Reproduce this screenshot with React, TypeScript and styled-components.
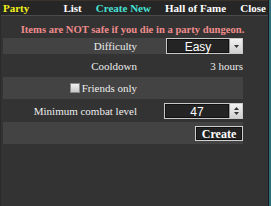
import React from "react";
import styled, { createGlobalStyle } from "styled-components";

const GlobalStyle = createGlobalStyle`
  body {
    margin: 0;
    background: #2f6f7c;
    font-family: "Liberation Serif", "Times New Roman", serif;
  }
`;

const Panel = styled.div`
  width: 267px;
  height: 206px;
  background: #333333;
  border-left: 1px solid #2a2a2a;
  border-right: 1px solid #1c1c1c;
  display: flex;
  flex-direction: column;
`;

const Header = styled.div`
  height: 16px;
  background: #262626;
  border-top: 1px solid #3a3128;
  border-bottom: 1px solid #4a4a4a;
  display: flex;
  align-items: center;
  justify-content: space-between;
  padding: 0 2px 0 2px;
  box-sizing: border-box;
`;

const Tab = styled.span<{ $color: string; $offset?: number }>`
  color: ${(p) => p.$color};
  font-weight: bold;
  font-size: 11px;
  margin-left: ${(p) => p.$offset ?? 0}px;
`;

const Warning = styled.div`
  color: #f08c8c;
  font-weight: bold;
  font-size: 10.6px;
  text-align: center;
  padding: 9px 4px 3px 0;
  line-height: 10px;
`;

const Rows = styled.div`
  width: 240px;
  margin-left: 2px;
  display: flex;
  flex-direction: column;
`;

const Row = styled.div<{ $shade: boolean; $height: number }>`
  display: grid;
  grid-template-columns: 134px 1fr;
  align-items: center;
  height: ${(p) => p.$height}px;
  background: ${(p) => (p.$shade ? "#434343" : "transparent")};
  color: #ececec;
  font-size: 11px;
`;

const Label = styled.div`
  display: flex;
  justify-content: flex-end;
  align-items: center;
  gap: 2px;
`;

const Value = styled.div`
  display: flex;
  justify-content: flex-end;
`;

const Field = styled.div<{ $width: number }>`
  width: ${(p) => p.$width}px;
  height: 16px;
  box-sizing: border-box;
  border: 1px solid #c9c9c9;
  background: #242424;
  display: flex;
  align-items: stretch;
`;

const FieldText = styled.div`
  flex: 1;
  text-align: center;
  color: #ffffff;
  font-family: "Liberation Sans", Arial, sans-serif;
  font-size: 12px;
  line-height: 14px;
  border: 1px solid #111;
`;

const ArrowBox = styled.div`
  width: 12px;
  background: linear-gradient(#f2f2f2, #cfcfcf);
  border-left: 1px solid #999;
  display: flex;
  flex-direction: column;
  align-items: center;
  justify-content: center;
  gap: 2px;
`;

const Checkbox = styled.span`
  width: 8px;
  height: 8px;
  border: 1px solid #8a8a8a;
  background: linear-gradient(#f0f0f0, #c8c8c8);
`;

const Button = styled.button`
  width: 48px;
  height: 15px;
  padding: 0;
  margin-top: 1px;
  box-sizing: border-box;
  border: 1px solid #cfcfcf;
  outline: 1px solid #111;
  outline-offset: -2px;
  background: #232323;
  color: #ffffff;
  font-family: "Liberation Serif", "Times New Roman", serif;
  font-weight: bold;
  font-size: 12px;
  line-height: 12px;
`;

const Triangle = ({ up }: { up?: boolean }) => (
  <svg width="5" height="3" viewBox="0 0 5 3">
    <path d={up ? "M0 3 L2.5 0 L5 3 Z" : "M0 0 L5 0 L2.5 3 Z"} fill="#333" />
  </svg>
);

export default function App() {
  return (
    <>
      <GlobalStyle />
      <Panel>
        <Header>
          <Tab $color="#f2f21a">Party</Tab>
          <Tab $color="#ffffff" $offset={20}>List</Tab>
          <Tab $color="#46e2d6">Create New</Tab>
          <Tab $color="#ffffff">Hall of Fame</Tab>
          <Tab $color="#ffffff">Close</Tab>
        </Header>
        <Warning>Items are NOT safe if you die in a party dungeon.</Warning>
        <Rows>
          <Row $shade $height={16}>
            <Label>Difficulty</Label>
            <Value>
              <Field $width={77}>
                <FieldText>Easy</FieldText>
                <ArrowBox>
                  <Triangle />
                </ArrowBox>
              </Field>
            </Value>
          </Row>
          <Row $shade={false} $height={23}>
            <Label>Cooldown</Label>
            <Value>3 hours</Value>
          </Row>
          <Row $shade $height={22}>
            <Label>
              <Checkbox />
              Friends only
            </Label>
            <Value />
          </Row>
          <Row $shade={false} $height={23}>
            <Label>Minimum combat level</Label>
            <Value>
              <Field $width={79}>
                <FieldText>47</FieldText>
                <ArrowBox>
                  <Triangle up />
                  <Triangle />
                </ArrowBox>
              </Field>
            </Value>
          </Row>
          <Row $shade $height={22}>
            <Label />
            <Value>
              <Button>Create</Button>
            </Value>
          </Row>
        </Rows>
      </Panel>
    </>
  );
}
